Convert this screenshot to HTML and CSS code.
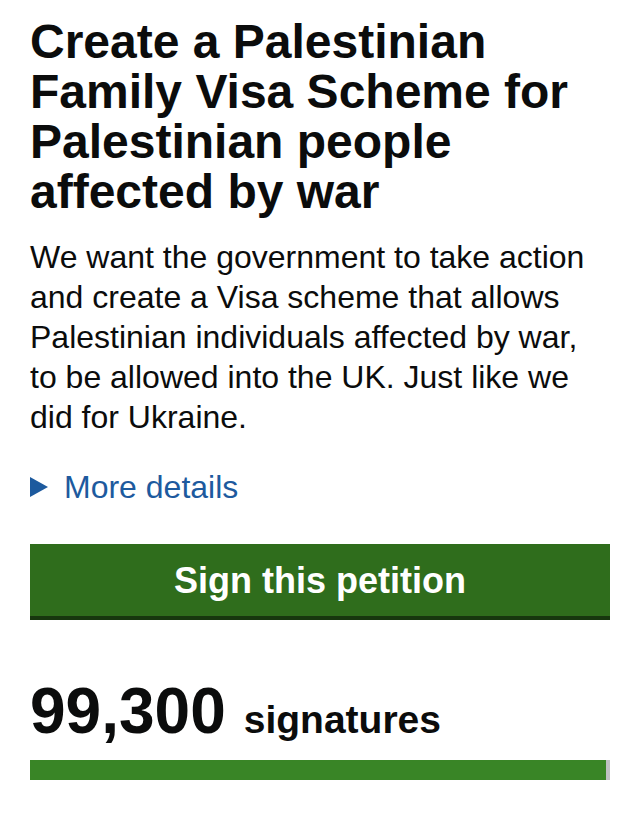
FILE: index.html
```html
<!DOCTYPE html>
<html lang="en">
<head>
<meta charset="utf-8">
<meta name="viewport" content="width=device-width, initial-scale=1">
<title>Create a Palestinian Family Visa Scheme</title>
<link rel="stylesheet" href="styles.css">
</head>
<body>
<main class="petition">
  <h1 class="title">Create a Palestinian<br>Family Visa Scheme for<br>Palestinian people<br>affected by war</h1>
  <p class="summary">We want the government to take action<br>and create a Visa scheme that allows<br>Palestinian individuals affected by war,<br>to be allowed into the UK. Just like we<br>did for Ukraine.</p>
  <details class="details">
    <summary class="details-toggle"><svg class="marker" viewBox="0 0 18 20" aria-hidden="true"><path d="M0 0L18 10L0 20Z"/></svg>More details</summary>
  </details>
  <button class="sign" type="button">Sign this petition</button>
  <p class="count"><span class="number">99,300</span><span class="unit">signatures</span></p>
  <div class="track"><div class="fill" style="width: 99.3%"></div></div>
</main>
</body>
</html>
```
FILE: styles.css
```css
body {
  margin: 0;
  background: #fff;
  color: #0b0c0c;
  font-family: "Liberation Sans", Arial, sans-serif;
}

.petition {
  padding: 17px 30px 34px;
}

.title {
  margin: 0;
  font-size: 48px;
  line-height: 50px;
  font-weight: 700;
}

.summary {
  margin: 20px 0 0;
  font-size: 32px;
  line-height: 40px;
}

.details {
  margin-top: 30px;
  color: #1d5a9e;
  font-size: 32px;
  line-height: 40px;
}

.details-toggle {
  display: flex;
  align-items: center;
  gap: 16px;
  width: fit-content;
  cursor: pointer;
}

.marker {
  width: 18px;
  height: 20px;
  fill: currentColor;
}

.sign {
  display: block;
  width: 100%;
  margin: 37px 0 0;
  padding: 17px 0 15px;
  border: 0;
  border-bottom: 4px solid #17370e;
  background: #2f6d1c;
  color: #fff;
  font: 700 36px/40px "Liberation Sans", Arial, sans-serif;
  cursor: pointer;
}

.count {
  display: flex;
  align-items: baseline;
  gap: 18px;
  margin: 56px 0 0;
  font-weight: 700;
}

.number {
  font-size: 64px;
  line-height: 70px;
}

.unit {
  font-size: 39px;
  line-height: 40px;
}

.track {
  height: 20px;
  margin-top: 14px;
  background: #bfc1c3;
}

.fill {
  height: 100%;
  background: #398526;
}
```
